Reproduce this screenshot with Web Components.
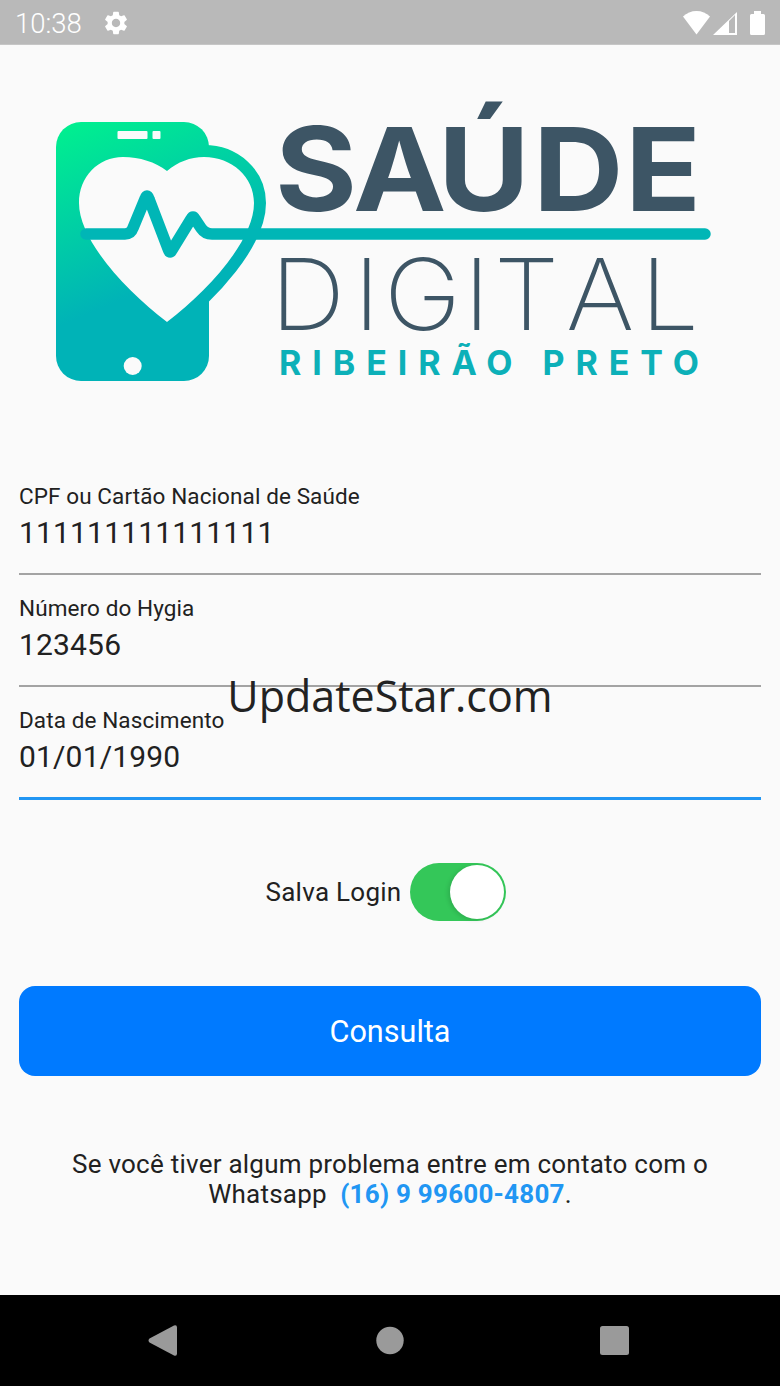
<!DOCTYPE html>
<html lang="pt-BR">
<head>
<meta charset="utf-8">
<title>Saúde Digital</title>
<style>
  html, body { margin: 0; background: #fafafa; }
</style>
</head>
<body>
<phone-screen>
  <status-bar slot="top" time="10:38"></status-bar>
  <brand-logo></brand-logo>
  <text-field label="CPF ou Cartão Nacional de Saúde" value="111111111111111"></text-field>
  <text-field label="Número do Hygia" value="123456"></text-field>
  <text-field label="Data de Nascimento" value="01/01/1990" focused></text-field>
  <login-switch label="Salva Login"></login-switch>
  <primary-button>Consulta</primary-button>
  <help-note>Se você tiver algum problema entre em contato com o<br>Whatsapp&nbsp; <a>(16) 9 99600-4807</a>.</help-note>
  <nav-bar slot="bottom"></nav-bar>
  <water-mark slot="over">UpdateStar.com</water-mark>
</phone-screen>

<script>
function makeTemplate(html) {
  const t = document.createElement('template');
  t.innerHTML = html;
  return t;
}

class BaseElement extends HTMLElement {
  constructor(tpl) {
    super();
    this.attachShadow({ mode: 'open' }).appendChild(tpl.content.cloneNode(true));
  }
}

const screenTpl = makeTemplate(`
  <style>
    :host { display: flex; flex-direction: column; position: relative; width: 780px; height: 1386px; overflow: hidden;
      background: #fafafa; color: #212121; font-family: Roboto, "Liberation Sans", sans-serif; }
    main { flex: 1; display: flex; flex-direction: column; padding: 0 19px; min-height: 0; }
  </style>
  <slot name="top"></slot>
  <main><slot></slot></main>
  <slot name="bottom"></slot>
  <slot name="over"></slot>
`);
class PhoneScreen extends BaseElement { constructor() { super(screenTpl); } }
customElements.define('phone-screen', PhoneScreen);

const statusTpl = makeTemplate(`
  <style>
    :host { display: flex; align-items: center; height: 45px; flex: none; box-sizing: border-box; padding: 0 15px 0 15px;
      background: #b9b9b9; color: #fff; box-shadow: inset 0 -1px 0 #c6c6c6; }
    .time { font-size: 27.500px; font-weight: 300; width: 87px; line-height: 45px; padding-top: 2px; }
    .gear { width: 28px; height: 28px; fill: #fff; }
    .right { margin-left: auto; display: flex; align-items: center; }
    svg { display: block; }
  </style>
  <span class="time"></span>
  <svg class="gear" viewBox="0 0 24 24"><path d="M19.14 12.94c.04-.3.06-.61.06-.94 0-.32-.02-.64-.07-.94l2.03-1.58c.18-.14.23-.41.12-.61l-1.92-3.32c-.12-.22-.37-.29-.59-.22l-2.39.96c-.5-.38-1.03-.7-1.62-.94l-.36-2.54c-.04-.24-.24-.41-.48-.41h-3.84c-.24 0-.43.17-.47.41l-.36 2.54c-.59.24-1.13.57-1.62.94l-2.39-.96c-.22-.08-.47 0-.59.22L2.74 8.87c-.12.21-.08.47.12.61l2.03 1.58c-.05.3-.09.63-.09.94s.02.64.07.94l-2.03 1.58c-.18.14-.23.41-.12.61l1.92 3.32c.12.22.37.29.59.22l2.39-.96c.5.38 1.03.7 1.62.94l.36 2.54c.05.24.24.41.48.41h3.84c.24 0 .44-.17.47-.41l.36-2.54c.59-.24 1.13-.56 1.62-.94l2.39.96c.22.08.47 0 .59-.22l1.92-3.32c.12-.22.07-.47-.12-.61l-2.01-1.58zM12 15.6c-1.98 0-3.6-1.62-3.6-3.6s1.62-3.6 3.6-3.6 3.6 1.62 3.6 3.6-1.62 3.6-3.6 3.6z"/></svg>
  <div class="right">
    <svg width="82" height="26" viewBox="683 9 82 26" fill="#fff">
      <path d="M683 15.5C690 8 703 8 710 15.5L696.5 33.5Z"/>
      <path fill-rule="evenodd" d="M737 11V34H713ZM729 20V32H735V14Z"/>
      <path d="M754 10H761V13H763.5A1.5 1.5 0 0 1 765 14.5V32.5A1.5 1.5 0 0 1 763.5 34H751.500A1.5 1.5 0 0 1 750 32.500V14.500A1.5 1.5 0 0 1 751.500 13H754Z"/>
    </svg>
  </div>
`);
class StatusBar extends BaseElement {
  constructor() { super(statusTpl); }
  connectedCallback() { this.shadowRoot.querySelector('.time').textContent = this.getAttribute('time'); }
}
customElements.define('status-bar', StatusBar);

// viewBox is in page coordinates so the logo numbers stay readable
const logoTpl = makeTemplate(`
  <style>
    :host { display: block; height: 418px; margin: 0 -19px; flex: none; }
    svg { display: block; }
    text { font-family: Inter, "Liberation Sans", sans-serif; }
  </style>
  <svg width="780" height="418" viewBox="0 45 780 418">
    <defs>
      <linearGradient id="g" gradientUnits="userSpaceOnUse" x1="75" y1="125" x2="145" y2="290">
        <stop offset="0" stop-color="#00ee90"/>
        <stop offset="1" stop-color="#00b3b7"/>
      </linearGradient>
    </defs>
    <rect x="56" y="122" width="153" height="259" rx="25" fill="url(#g)"/>
    <rect x="117.500" y="131" width="30" height="8" rx="1" fill="#fafafa"/>
    <rect x="152.500" y="131" width="8" height="8" rx="1" fill="#fafafa"/>
    <circle cx="132.700" cy="366" r="9" fill="#fafafa"/>
    <path d="M167 171C155 162 140 157 123 157C98 157 79 177 79 203C79 240 125 290 167 322C209 290 254 240 254 203C254 177 232 157 204 157C190 157 178 162 167 171Z"
      fill="#fafafa" stroke="url(#g)" stroke-width="24" stroke-linejoin="miter" paint-order="stroke"/>
    <path d="M86 234H125Q131 234 133 228L145 199Q147 193 149 199L168.500 250Q170 254 172 250L191 219Q193 215 195 219L201 228Q205 234 212 234H705"
      fill="none" stroke="#00b6b6" stroke-width="11.500" stroke-linecap="round" stroke-linejoin="round"/>
    <text transform="scale(1.08 1)" x="254.600 326.900 405.600 493.500 578.800" y="211" font-weight="700" font-size="116" fill="#3d5565">SAÚDE</text>
    <text transform="scale(1.05 1)" x="257.600 336.700 365.700 441.400 470.500 539 610" y="330" font-weight="250" font-size="99" fill="#3d5565">DIGITAL</text>
    <text x="279" y="375" font-weight="700" font-size="34" fill="#0cb0b8" textLength="420">RIBEIRÃO PRETO</text>
  </svg>
`);
class BrandLogo extends BaseElement { constructor() { super(logoTpl); } }
customElements.define('brand-logo', BrandLogo);

const fieldTpl = makeTemplate(`
  <style>
    :host { display: block; flex: none; height: 112px; box-sizing: border-box; padding-top: 21px; border-bottom: 2px solid #a3a3a3; }
    :host([focused]) { border-bottom: 3px solid #2196f3; height: 113px; }
    .label { font-size: 22.500px; line-height: 24px; letter-spacing: .1px; }
    .value { font-size: 30px; line-height: 38px; margin-top: 6px; letter-spacing: .17px; }
  </style>
  <div class="label"></div>
  <div class="value"></div>
`);
class TextField extends BaseElement {
  constructor() { super(fieldTpl); }
  connectedCallback() {
    this.shadowRoot.querySelector('.label').textContent = this.getAttribute('label');
    this.shadowRoot.querySelector('.value').textContent = this.getAttribute('value');
  }
}
customElements.define('text-field', TextField);

const switchTpl = makeTemplate(`
  <style>
    :host { display: flex; justify-content: center; align-items: center; gap: 9px; flex: none; margin-top: 63px; padding-right: 8px; }
    .label { font-size: 26px; letter-spacing: .27px; }
    .track { width: 96px; height: 58px; box-sizing: border-box; border-radius: 29px; background: #34c759; padding: 2px; display: flex; justify-content: flex-end; }
    .knob { width: 54px; height: 54px; border-radius: 50%; background: #fff; box-shadow: -2px 1px 4px rgba(0,0,0,.12); }
  </style>
  <span class="label"></span>
  <div class="track"><div class="knob"></div></div>
`);
class LoginSwitch extends BaseElement {
  constructor() { super(switchTpl); }
  connectedCallback() { this.shadowRoot.querySelector('.label').textContent = this.getAttribute('label'); }
}
customElements.define('login-switch', LoginSwitch);

const buttonTpl = makeTemplate(`
  <style>
    :host { display: flex; align-items: center; justify-content: center; flex: none; height: 90px; margin-top: 65px;
      background: #007aff; color: #fff; border-radius: 16px; font-size: 30.600px; }
  </style>
  <slot></slot>
`);
class PrimaryButton extends BaseElement { constructor() { super(buttonTpl); } }
customElements.define('primary-button', PrimaryButton);

const noteTpl = makeTemplate(`
  <style>
    :host { display: block; flex: none; margin-top: 73px; text-align: center; font-size: 26px; line-height: 30px; letter-spacing: .24px; }
    ::slotted(a) { color: #2196f3; font-weight: 700; }
  </style>
  <slot></slot>
`);
class HelpNote extends BaseElement { constructor() { super(noteTpl); } }
customElements.define('help-note', HelpNote);

const navTpl = makeTemplate(`
  <style>
    :host { display: flex; flex: none; height: 91px; background: #000; }
    svg { display: block; }
  </style>
  <svg width="780" height="91" viewBox="0 1295 780 91" fill="#9a9a9a">
    <path d="M149.500 1338.500L174 1325.500Q177 1324.500 177 1327.500V1353.500Q177 1356.500 174 1355.500L149.500 1342.500Q147.500 1340.500 149.500 1338.500Z"/>
    <circle cx="390" cy="1340.500" r="13.700"/>
    <rect x="600" y="1326" width="29" height="29" rx="2.500"/>
  </svg>
`);
class NavBar extends BaseElement { constructor() { super(navTpl); } }
customElements.define('nav-bar', NavBar);

const markTpl = makeTemplate(`
  <style>
    :host { position: absolute; left: 0; right: 0; top: 666px; text-align: center; font-family: "Open Sans", sans-serif; font-size: 43px; line-height: 60px; color: #222; }
  </style>
  <slot></slot>
`);
class WaterMark extends BaseElement { constructor() { super(markTpl); } }
customElements.define('water-mark', WaterMark);
</script>
</body>
</html>
